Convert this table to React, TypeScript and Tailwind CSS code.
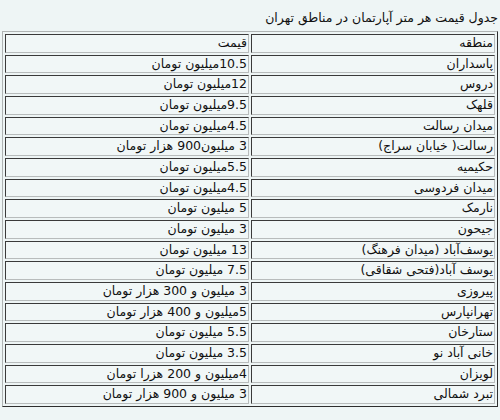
const rows: [string, string][] = [
    ['پاسداران', '10.5میلیون تومان'],
    ['دروس', '12میلیون تومان'],
    ['قلهک', '9.5میلیون تومان'],
    ['میدان رسالت', '4.5میلیون تومان'],
    ['رسالت( خیابان سراج)', '3 میلیون900 هزار تومان'],
    ['حکیمیه', '5.5میلیون تومان'],
    ['میدان فردوسی', '4.5میلیون تومان'],
    ['نارمک', '5 میلیون تومان'],
    ['جیحون', '3 میلیون تومان'],
    ['یوسف‌آباد (میدان فرهنگ)', '13 میلیون تومان'],
    ['یوسف آباد(فتحی شقاقی)', '7.5 میلیون تومان'],
    ['پیروزی', '3 میلیون و 300 هزار تومان'],
    ['تهرانپارس', '5میلیون و 400 هزار تومان'],
    ['ستارخان', '5.5 میلیون تومان'],
    ['خانی آباد نو', '3.5 میلیون تومان'],
    ['لویزان', '4میلیون و 200 هزرا تومان'],
    ['تبرد شمالی', '3 میلیون و 900 هزار تومان'],
];

function Cell({ children }: { children: string }) {
    return (
        <td className="w-1/2 border border-t-[#3a3a3a] border-l-[#3a3a3a] border-b-[#b8bcbc] border-r-[#b8bcbc] bg-[#f1f7f7] px-[1px] py-0 text-right leading-[16.67px]">
            {children}
        </td>
    );
}

export default function App() {
    return (
        <div
            dir="rtl"
            className="min-h-[420px] bg-[#eef5f5] px-[2px] pt-[8px] font-['DejaVu_Sans',sans-serif] text-[12.5px] text-[#111]"
        >
            <p className="h-[23px] leading-[20px]">جدول قیمت هر متر آپارتمان در مناطق تهران</p>
            <table className="w-full table-fixed border-separate border-spacing-[2px] border border-t-[#b0b4b4] border-l-[#b0b4b4] border-b-[#2e2e2e] border-r-[#2e2e2e]">
                <tbody>
                    <tr>
                        <Cell>منطقه</Cell>
                        <Cell>قیمت</Cell>
                    </tr>
                    {rows.map(([area, price]) => (
                        <tr key={area}>
                            <Cell>{area}</Cell>
                            <Cell>{price}</Cell>
                        </tr>
                    ))}
                </tbody>
            </table>
        </div>
    );
}
